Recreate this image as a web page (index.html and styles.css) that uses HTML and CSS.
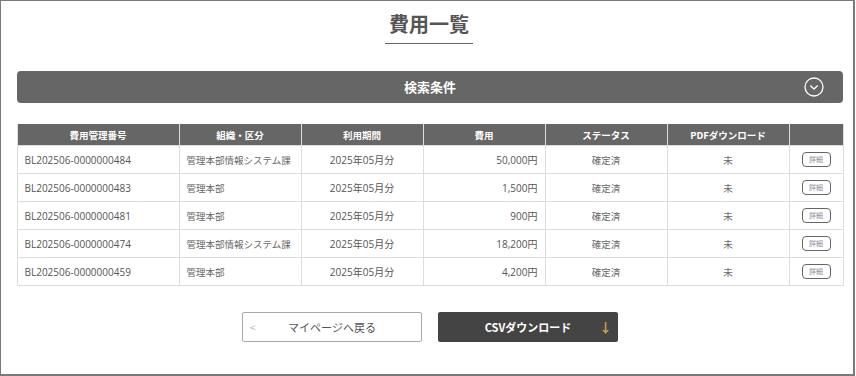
FILE: index.html
```html
<!DOCTYPE html>
<html lang="ja">
<head>
<meta charset="utf-8">
<link rel="stylesheet" href="styles.css">
</head>
<body>
<div class="frame">
  <h1 class="title">費用一覧</h1>
  <div class="search">
    <span class="search-label">検索条件</span>
    <svg class="search-icon" width="20" height="20" viewBox="0 0 20 20"><circle cx="10" cy="10" r="9" fill="none" stroke="#fff" stroke-width="1.3"/><path d="M6.3 8.6 L10 12 L13.7 8.6" fill="none" stroke="#fff" stroke-width="1.3"/></svg>
  </div>
  <table class="list">
    <colgroup>
      <col class="c1"><col class="c2"><col class="c3"><col class="c4"><col class="c5"><col class="c6"><col class="c7">
    </colgroup>
    <thead>
      <tr><th>費用管理番号</th><th>組織・区分</th><th>利用期間</th><th>費用</th><th>ステータス</th><th>PDFダウンロード</th><th></th></tr>
    </thead>
    <tbody>
      <tr><td class="l">BL202506-0000000484</td><td class="l jp">管理本部情報システム課</td><td>2025年05月分</td><td class="r">50,000円</td><td class="jp">確定済</td><td class="jp">未</td><td><span class="detail">詳細</span></td></tr>
      <tr><td class="l">BL202506-0000000483</td><td class="l jp">管理本部</td><td>2025年05月分</td><td class="r">1,500円</td><td class="jp">確定済</td><td class="jp">未</td><td><span class="detail">詳細</span></td></tr>
      <tr><td class="l">BL202506-0000000481</td><td class="l jp">管理本部</td><td>2025年05月分</td><td class="r">900円</td><td class="jp">確定済</td><td class="jp">未</td><td><span class="detail">詳細</span></td></tr>
      <tr><td class="l">BL202506-0000000474</td><td class="l jp">管理本部情報システム課</td><td>2025年05月分</td><td class="r">18,200円</td><td class="jp">確定済</td><td class="jp">未</td><td><span class="detail">詳細</span></td></tr>
      <tr><td class="l">BL202506-0000000459</td><td class="l jp">管理本部</td><td>2025年05月分</td><td class="r">4,200円</td><td class="jp">確定済</td><td class="jp">未</td><td><span class="detail">詳細</span></td></tr>
    </tbody>
  </table>
  <div class="actions">
    <a class="btn back"><span class="chev">&lt;</span>マイページへ戻る</a>
    <a class="btn csv">CSVダウンロード<span class="arrow">↓</span></a>
  </div>
</div>
</body>
</html>
```
FILE: styles.css
```css
html, body { margin: 0; padding: 0; background: #fff; }
body { font-family: "Open Sans", "Noto Sans CJK JP", sans-serif; color: #555; }
.frame {
  box-sizing: border-box;
  width: 855px;
  height: 376px;
  border: 1px solid #7a7a7a;
  border-right-width: 2px;
  border-bottom-width: 2px;
  padding: 0 10px 0 16px;
  display: flex;
  flex-direction: column;
  align-items: center;
}
.title {
  margin: 9px 0 0;
  font-family: "Noto Sans CJK JP", sans-serif;
  font-size: 20px;
  font-weight: 700;
  line-height: 28px;
  color: #555;
  padding: 0 2px 5px;
  border-bottom: 1px solid #666;
  width: 84px;
  text-align: center;
  margin-left: -2px;
}
.search {
  margin-top: 27px;
  width: 826px;
  height: 32px;
  background: #666;
  border-radius: 4px;
  display: flex;
  align-items: center;
  justify-content: center;
  position: relative;
}
.search-label {
  color: #fff;
  font-family: "Noto Sans CJK JP", sans-serif;
  font-weight: 700;
  font-size: 13px;
  margin-top: -2px;
}
.search-icon { position: absolute; right: 19px; top: 6px; }
.list {
  margin-top: 21px;
  width: 826px;
  border-collapse: collapse;
  table-layout: fixed;
  font-size: 10px;
}
.c1 { width: 162px; } .c2, .c3, .c4, .c5, .c6 { width: 122px; } .c7 { width: 54px; }
.list th {
  background: #666;
  color: #fff;
  font-family: "Noto Sans CJK JP", sans-serif;
  font-weight: 700;
  font-size: 9.5px;
  height: 21px;
  padding: 0;
  border: 1px solid #ddd;
  border-top: none;
  border-bottom: none;
}
.list td {
  height: 27px;
  padding: 0 7px;
  border: 1px solid #ddd;
  text-align: center;
  color: #555;
  white-space: nowrap;
}
.list td.l { text-align: left; }
.list td.r { text-align: right; }
.list td.jp { font-size: 9.5px; color: #666; }
.detail {
  display: inline-block;
  box-sizing: border-box;
  width: 29px;
  height: 15px;
  line-height: 13px;
  border: 1px solid #666;
  border-radius: 4px;
  font-size: 7px;
  color: #8a8aa0;
  vertical-align: middle;
}
.actions {
  margin-top: 26px;
  display: flex;
  gap: 16px;
  margin-left: 0;
}
.btn {
  box-sizing: border-box;
  width: 180px;
  height: 30px;
  display: flex;
  align-items: center;
  justify-content: center;
  position: relative;
  font-family: "Noto Sans CJK JP", sans-serif;
  font-size: 11px;
}
.back { border: 1px solid #aaa; color: #555; background: #fff; border-radius: 2px; }
.chev { position: absolute; left: 7px; top: 6px; color: #999; font-size: 11px; font-weight: 300; }
.csv { background: #444; color: #fff; font-weight: 700; border-radius: 2px; }
.arrow { position: absolute; right: 6px; top: 5px; color: #c9a94a; font-size: 13px; font-weight: 700; }
```
